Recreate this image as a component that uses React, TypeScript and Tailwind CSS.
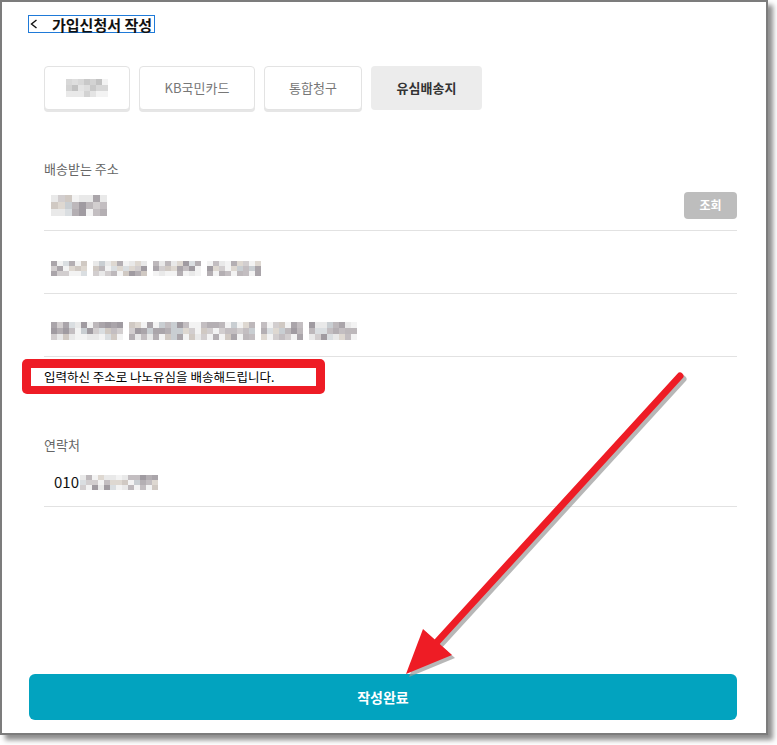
import React from "react";

const KR = "font-['Noto_Sans_CJK_KR','Noto_Sans',sans-serif]";

// pseudo random so the blurred bits look the same every render
function seeded(seed: number) {
  let s = seed;
  return () => {
    s = (s * 9301 + 49297) % 233280;
    return s / 233280;
  };
}

const darkTones = ["#c3bec1", "#b4afb3", "#d2cecf", "#c9ced2", "#ded8d1", "#aaa5aa", "#dadee1", "#bdb8bb", "#a09ba1", "#d0c9c3"];
const paleTones = ["#d3d3d3", "#dedede", "#c9c9c9", "#e4e4e4", "#c2c2c2", "#d8d8d8"];

type MosaicProps = {
  segs: number[];
  rows?: number;
  cw?: number;
  ch?: number;
  seed?: number;
  pale?: boolean;
};

function Mosaic({ segs, rows = 3, cw = 6, ch = 6, seed = 1, pale = false }: MosaicProps) {
  const rnd = seeded(seed);
  const tones = pale ? paleTones : darkTones;
  const cols: (string[] | null)[] = [];
  segs.forEach((n, i) => {
    if (i > 0) cols.push(null);
    for (let c = 0; c < n; c++) {
      const col: string[] = [];
      for (let r = 0; r < rows; r++) {
        const edge = r === 0 || r === rows - 1;
        const v = rnd();
        if (v < (edge ? 0.4 : 0.1)) col.push(v < 0.2 ? "#f3f3f3" : "#e9e9e9");
        else col.push(tones[Math.floor(rnd() * tones.length)]);
      }
      cols.push(col);
    }
  });

  return (
    <div className="flex">
      {cols.map((col, i) =>
        col === null ? (
          <div key={i} style={{ width: cw, height: rows * ch }} />
        ) : (
          <div key={i} className="flex flex-col">
            {col.map((c, j) => (
              <div key={j} style={{ width: cw, height: ch, background: c }} />
            ))}
          </div>
        )
      )}
    </div>
  );
}

const tabs = [
  { key: "t1", w: "w-[86px]", label: null },
  { key: "t2", w: "w-[116px]", label: "KB국민카드" },
  { key: "t3", w: "w-[98px]", label: "통합청구" },
  { key: "t4", w: "w-[111px]", label: "유심배송지", active: true },
];

export default function App() {
  return (
    <div className={`w-[777px] h-[745px] bg-white ${KR}`}>
      <div className="relative flex flex-col w-[768px] h-[735px] bg-white border-2 border-[#7c7c7c] shadow-[5px_5px_5px_rgba(0,0,0,0.45)]">
        {/* header */}
        <div className="mt-[13px] ml-[26px] w-[127px] h-[18px] flex items-center border border-[#1f7ad8]">
          <svg width="8" height="10" viewBox="0 0 8 10" className="ml-[1px] shrink-0">
            <polyline points="6.5,1 1.5,5 6.5,9" fill="none" stroke="#111" strokeWidth="1.4" />
          </svg>
          <span className="ml-[14px] text-[15px] leading-[17px] font-bold text-[#111] whitespace-nowrap">가입신청서 작성</span>
        </div>

        {/* tabs */}
        <div className="mt-[33px] ml-[42px] flex gap-[9px]">
          {tabs.map((t) => (
            <div
              key={t.key}
              className={`${t.w} h-[44px] flex items-center justify-center rounded-[4px] text-[13px] ${
                t.active
                  ? "bg-[#ececec] font-bold text-[#333]"
                  : "bg-white border border-[#e3e3e3] shadow-[0_2px_0_#e6e6e6] text-[#777]"
              }`}
            >
              {t.label ?? <Mosaic segs={[7]} rows={3} cw={6} ch={6} seed={11} pale />}
            </div>
          ))}
        </div>

        {/* address */}
        <div className="ml-[42px] w-[693px] flex flex-col">
          <div className="mt-[51px] h-[16px] text-[13px] leading-[16px] text-[#666]">배송받는 주소</div>

          <div className="h-[54px] pt-[3px] flex items-center justify-between border-b border-[#e2e2e2]">
            <div className="ml-[7px]">
              <Mosaic segs={[8]} rows={3} cw={7} ch={7} seed={3} />
            </div>
            <button className="w-[53px] h-[27px] rounded-[4px] bg-[#bdbdbd] text-white text-[12px] font-bold">조회</button>
          </div>

          <div className="h-[63px] pt-[12px] flex items-center border-b border-[#e2e2e2]">
            <div className="ml-[7px]">
              <Mosaic segs={[6, 9, 8, 9]} rows={3} cw={6} ch={5} seed={7} />
            </div>
          </div>

          <div className="h-[63px] pt-[12px] flex items-center border-b border-[#e2e2e2]">
            <div className="ml-[7px]">
              <Mosaic segs={[12, 21, 7, 8]} rows={3} cw={6} ch={6} seed={19} />
            </div>
          </div>

          {/* highlighted note */}
          <div className="mt-[2px] -ml-[22px] w-[303px] h-[35px] rounded-[5px] bg-[#ee1c25] pt-[9px] pb-[8px] px-[9px]">
            <div className="h-full bg-white flex items-center pl-[13px] text-[12.5px] text-black whitespace-nowrap">
              입력하신 주소로 나노유심을 배송해드립니다.
            </div>
          </div>

          {/* contact */}
          <div className="mt-[43px] h-[16px] text-[13px] leading-[16px] text-[#666]">연락처</div>
          <div className="h-[54px] pt-[5px] flex items-center border-b border-[#e2e2e2]">
            <span className="ml-[10px] text-[15px] text-[#111]">010</span>
            <div className="ml-[1px]">
              <Mosaic segs={[13]} rows={3} cw={6} ch={5} seed={29} />
            </div>
          </div>
        </div>

        <button className="mt-auto mb-[13px] ml-[27px] w-[708px] h-[46px] rounded-[6px] bg-[#02a3bf] text-white text-[14px] font-bold">
          작성완료
        </button>

        {/* annotation arrow */}
        <svg className="absolute -left-[2px] -top-[2px] pointer-events-none" width="777" height="745" viewBox="0 0 777 745">
          <g fill="#9a9a9a" stroke="#9a9a9a" opacity="0.7" transform="translate(3 3)">
            <line x1="680" y1="376" x2="436" y2="643" strokeWidth="7" strokeLinecap="round" />
            <polygon points="406,674 423,629 452,655" stroke="none" />
          </g>
          <g fill="#ee1c25" stroke="#ee1c25">
            <line x1="680" y1="376" x2="436" y2="643" strokeWidth="7" strokeLinecap="round" />
            <polygon points="406,674 423,629 452,655" stroke="none" />
          </g>
        </svg>
      </div>
    </div>
  );
}
